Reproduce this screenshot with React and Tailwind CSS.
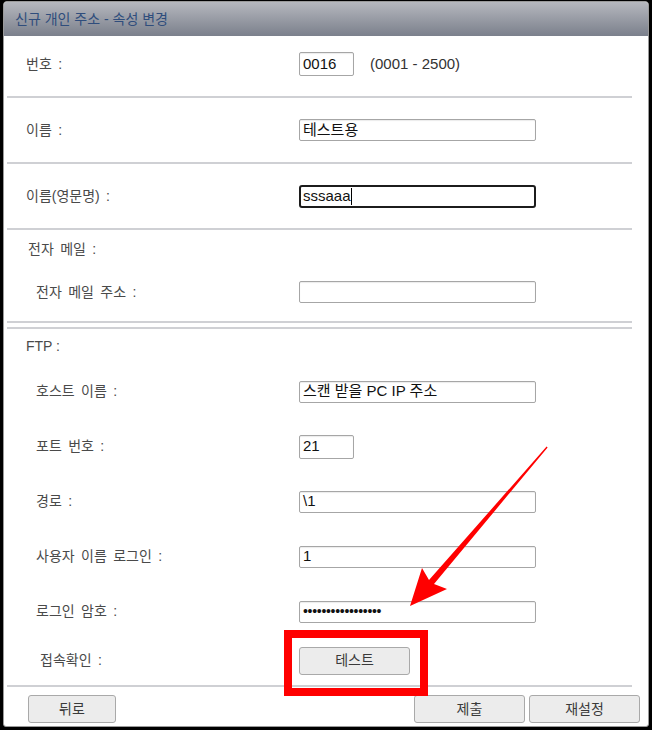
import React from 'react';

const FONT = { fontFamily: '"Liberation Sans", "Noto Sans CJK KR", sans-serif' };

function Field({ w = 'w-[237px]', h = 'h-[22px]', children }) {
    return (
        <div
            className={`${w} ${h} flex items-center px-[3px] border border-[#a6a6a6] rounded-[2px] bg-white text-[15px] text-[#111] shadow-[inset_0_1px_1px_rgba(0,0,0,0.08)]`}
        >
            {children}
        </div>
    );
}

function Row({ label, pad = 'pl-[22px]', h, children }) {
    return (
        <div className={`flex items-center ${h}`}>
            <div className={`w-[295px] ${pad} text-[14px] text-[#4a4a4a] [word-spacing:2.5px]`}>{label}</div>
            <div className="flex items-center">{children}</div>
        </div>
    );
}

function Divider() {
    return <div className="ml-[3px] mr-[16px] h-[2px] bg-[#cfd0d4]" />;
}

function Btn({ w, children }) {
    return (
        <div
            className={`${w} h-[28px] flex items-center justify-center border border-[#a9a9a9] rounded-[3px] bg-[#ececec] text-[14px] text-[#3a3a3a]`}
        >
            {children}
        </div>
    );
}

export default function App() {
    return (
        <div className="relative w-[652px] h-[730px] bg-black pt-px pl-[3px] pr-[3px] pb-[3px]" style={FONT}>
            <div className="h-full flex flex-col bg-white border border-[#9a9a9a] rounded-t-[4px] rounded-b-[3px] overflow-hidden">
                {/* title bar */}
                <div className="h-[34px] flex items-center pl-[11px] bg-gradient-to-b from-[#b6b8be] to-[#7b808c] text-[14px] text-[#2f4d7c]">
                    신규 개인 주소 - 속성 변경
                </div>

                <Row label="번호 :" h="h-[60px] pb-[4px]">
                    <Field w="w-[55px]" h="h-[24px]">0016</Field>
                    <span className="ml-[16px] text-[15px] text-[#333]">(0001 - 2500)</span>
                </Row>
                <Divider />
                <Row label="이름 :" h="h-[64px]">
                    <Field>테스트용</Field>
                </Row>
                <Divider />
                <Row label="이름(영문명) :" h="h-[64px]">
                    <div className="w-[237px] h-[23px] flex items-center px-[2px] border-2 border-[#1c1c1c] rounded-[3px] text-[15px] text-[#111]">
                        sssaaa
                        <span className="w-px h-[17px] bg-black" />
                    </div>
                </Row>
                <Divider />

                {/* e-mail */}
                <div className="h-[38px] flex items-center pl-[24px] text-[14px] text-[#4a4a4a] [word-spacing:2.5px]">전자 메일 :</div>
                <Row label="전자 메일 주소 :" pad="pl-[32px]" h="h-[48px]">
                    <Field />
                </Row>
                <div className="h-[5px]" />
                <Divider />
                <div className="h-[4px]" />
                <Divider />

                {/* FTP */}
                <div className="h-[35px] flex items-center pl-[22px] text-[14px] text-[#4a4a4a]">FTP :</div>
                <Row label="호스트 이름 :" pad="pl-[32px]" h="h-[55px]">
                    <Field>스캔 받을 PC IP 주소</Field>
                </Row>
                <Row label="포트 번호 :" pad="pl-[32px]" h="h-[55px]">
                    <Field w="w-[55px]" h="h-[24px]">21</Field>
                </Row>
                <Row label="경로 :" pad="pl-[32px]" h="h-[55px]">
                    <Field>\1</Field>
                </Row>
                <Row label="사용자 이름 로그인 :" pad="pl-[32px]" h="h-[55px]">
                    <Field>1</Field>
                </Row>
                <Row label="로그인 암호 :" pad="pl-[32px]" h="h-[55px]">
                    <Field>
                        <span className="text-[14px] tracking-[-0.3px]">•••••••••••••••••</span>
                    </Field>
                </Row>
                <Row label="접속확인 :" pad="pl-[36px]" h="h-[43px]">
                    <Btn w="w-[111px]">테스트</Btn>
                </Row>
                <div className="h-[3px]" />
                <Divider />

                {/* footer */}
                <div className="flex items-start pt-[8px] pl-[24px] pr-[8px]">
                    <Btn w="w-[88px]">뒤로</Btn>
                    <div className="flex-1" />
                    <div className="flex gap-[4px]">
                        <Btn w="w-[111px]">제출</Btn>
                        <Btn w="w-[111px]">재설정</Btn>
                    </div>
                </div>
            </div>

            {/* annotation: red box */}
            <div className="absolute left-[284px] top-[630px] w-[144px] h-[66px] border-[8px] border-[#ff0000]" />

            {/* annotation: red arrow */}
            <svg className="absolute left-0 top-0 pointer-events-none" width="652" height="730" viewBox="0 0 652 730">
                <polygon
                    fill="#ff0000"
                    points="410,606 447,589 434,584 547.6,447.4 546.6,446.6 429,580 422,568"
                />
            </svg>
        </div>
    );
}
